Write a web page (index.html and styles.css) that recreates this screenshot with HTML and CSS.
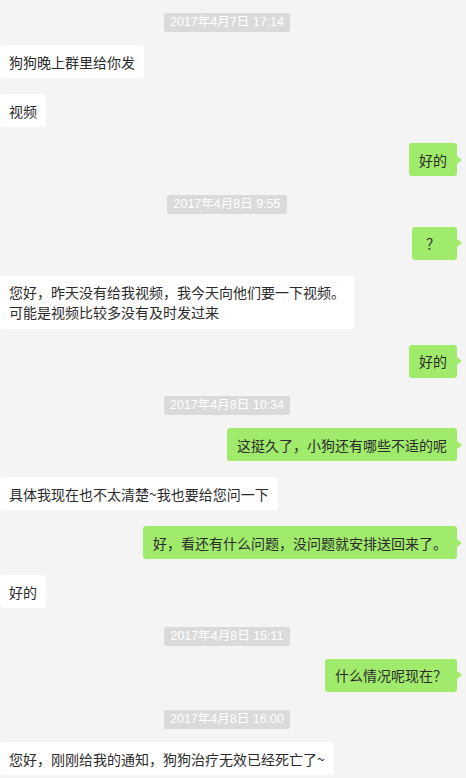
FILE: index.html
```html
<!DOCTYPE html>
<html lang="zh-CN">
<head>
    <meta charset="UTF-8">
    <meta name="viewport" content="width=device-width, initial-scale=1.0">
    <title>聊天记录</title>
    <link rel="stylesheet" href="styles.css">
</head>
<body>
<div class="chat">
    <div class="time"><span>2017年4月7日 17:14</span></div>
    <div class="msg left"><div class="bubble">狗狗晚上群里给你发</div></div>
    <div class="msg left"><div class="bubble">视频</div></div>
    <div class="msg right"><div class="bubble">好的</div></div>

    <div class="time"><span>2017年4月8日 9:55</span></div>
    <div class="msg right"><div class="bubble q">？</div></div>
    <div class="msg left"><div class="bubble">您好，昨天没有给我视频，我今天向他们要一下视频。<br>可能是视频比较多没有及时发过来</div></div>
    <div class="msg right"><div class="bubble">好的</div></div>

    <div class="time"><span>2017年4月8日 10:34</span></div>
    <div class="msg right"><div class="bubble">这挺久了，小狗还有哪些不适的呢</div></div>
    <div class="msg left"><div class="bubble">具体我现在也不太清楚~我也要给您问一下</div></div>
    <div class="msg right"><div class="bubble">好，看还有什么问题，没问题就安排送回来了。</div></div>
    <div class="msg left"><div class="bubble">好的</div></div>

    <div class="time"><span>2017年4月8日 15:11</span></div>
    <div class="msg right"><div class="bubble">什么情况呢现在？</div></div>

    <div class="time"><span>2017年4月8日 16:00</span></div>
    <div class="msg left"><div class="bubble">您好，刚刚给我的通知，狗狗治疗无效已经死亡了~</div></div>
</div>
</body>
</html>
```

FILE: styles.css
```css
body {
    margin: 0;
    background-color: #f4f4f4;
    font-family: "Noto Sans CJK SC", "Microsoft YaHei", sans-serif;
    color: #2b2b2b;
    overflow: hidden;
}
.chat {
    display: flex;
    flex-direction: column;
    padding-top: 13px;
}
.time {
    display: flex;
    justify-content: center;
    margin: 18.5px 12px 13px 0;
}
.time:first-child {
    margin-top: 0;
}
.time span {
    background-color: #dadada;
    color: #fff;
    font-size: 12.5px;
    line-height: 19px;
    padding: 0 6px;
    border-radius: 2px;
    font-family: "Liberation Sans", "Noto Sans CJK SC", sans-serif;
}
.msg {
    display: flex;
}
.msg + .msg {
    margin-top: 16px;
}
.msg.left {
    justify-content: flex-start;
}
.msg.right {
    justify-content: flex-end;
    padding-right: 9px;
}
.bubble {
    position: relative;
    font-size: 14px;
    line-height: 20px;
    padding: 6.5px 9px;
    border-radius: 3px;
    background-color: #fff;
}
.right .bubble {
    background-color: #a0ea6c;
    padding: 6.5px 10px;
}
.right .bubble::after {
    content: "";
    position: absolute;
    right: -5px;
    top: 50%;
    margin-top: -4px;
    border-style: solid;
    border-width: 4px 0 4px 5px;
    border-color: transparent transparent transparent #a0ea6c;
}
.right .bubble.q {
    padding: 6.5px 17px 6.5px 14px;
}
```
